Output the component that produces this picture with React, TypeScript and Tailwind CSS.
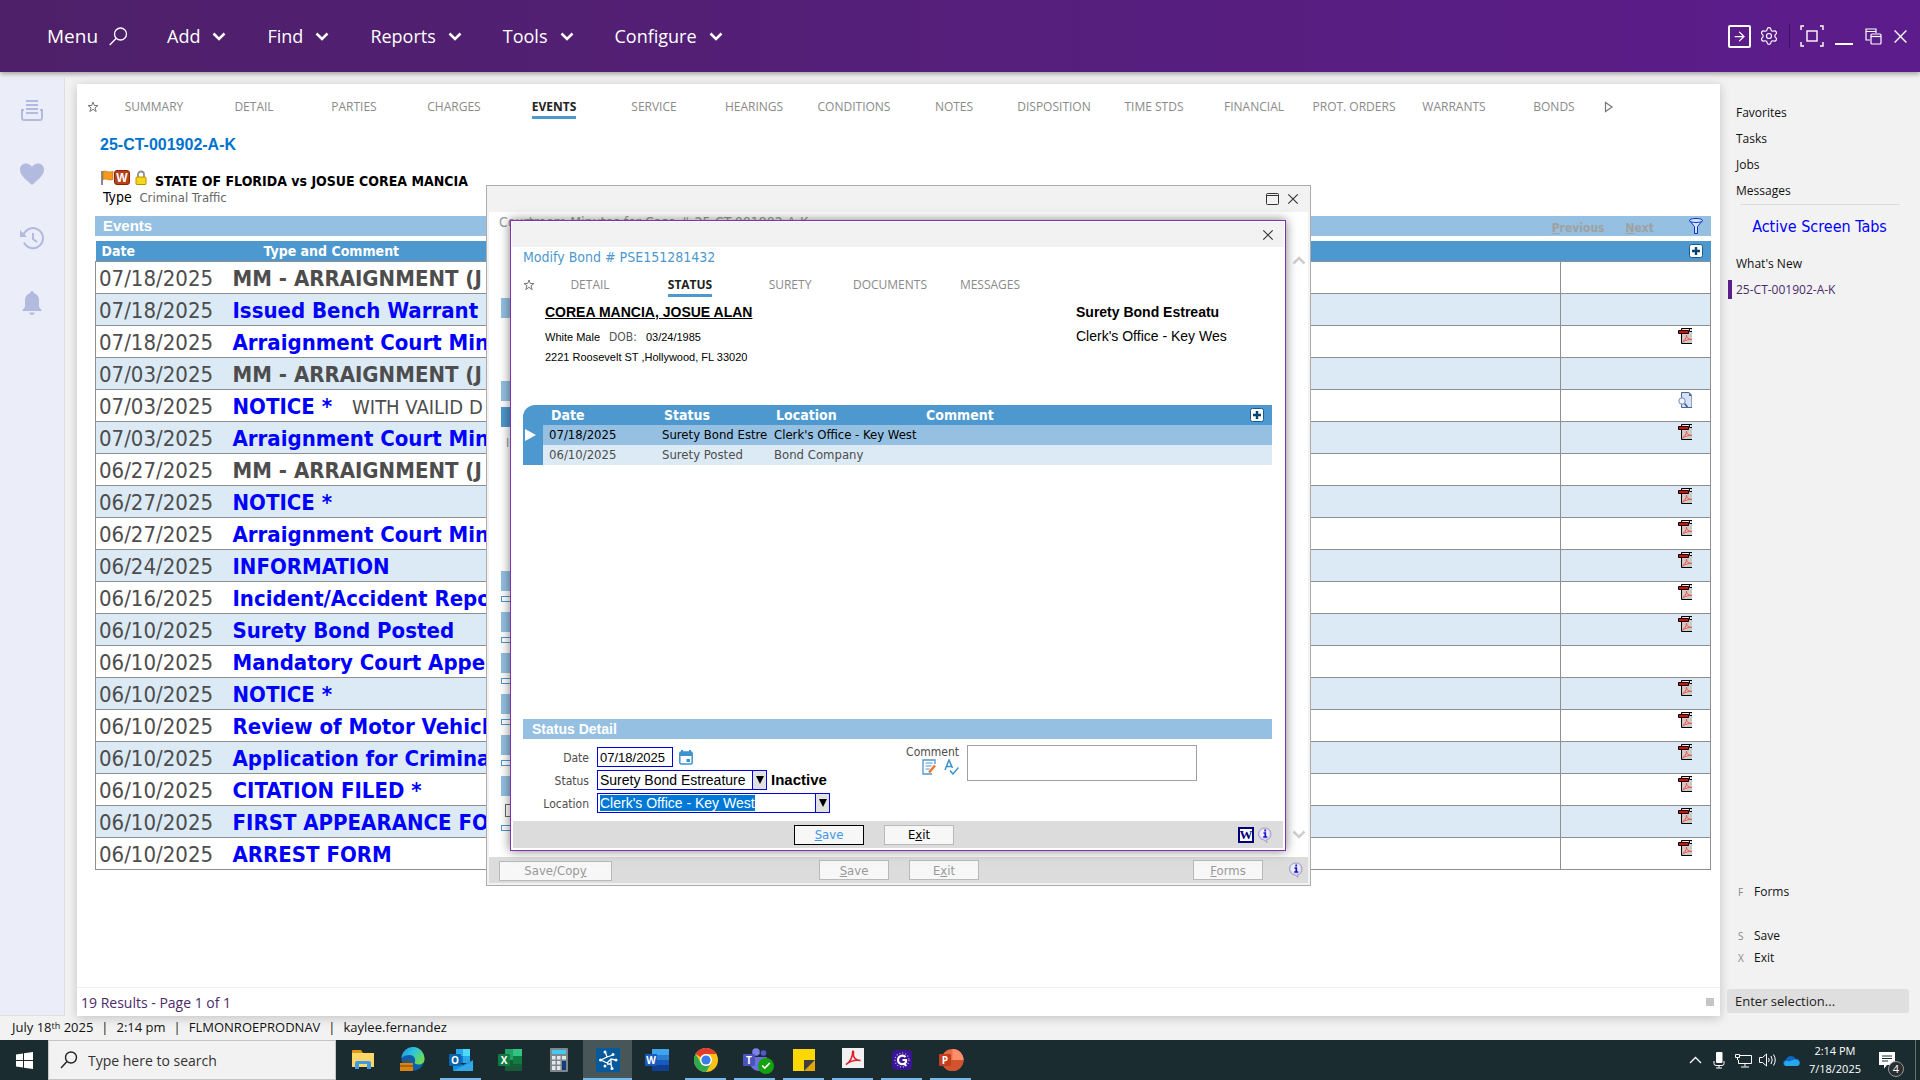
import type { ReactNode } from "react";
import { ArrowRight, Check, Settings } from "lucide-react";

const MENUS = ["Add", "Find", "Reports", "Tools", "Configure"];

const CASE_TABS = [
  "SUMMARY",
  "DETAIL",
  "PARTIES",
  "CHARGES",
  "EVENTS",
  "SERVICE",
  "HEARINGS",
  "CONDITIONS",
  "NOTES",
  "DISPOSITION",
  "TIME STDS",
  "FINANCIAL",
  "PROT. ORDERS",
  "WARRANTS",
  "BONDS",
];

const BOND_TABS = ["DETAIL", "STATUS", "SURETY", "DOCUMENTS", "MESSAGES"];

type EventRow = {
  date: string;
  title: string;
  note?: string;
  plain?: boolean;
  doc?: "pdf" | "scan";
};

const EVENTS: EventRow[] = [
  { date: "07/18/2025", title: "MM - ARRAIGNMENT (J", plain: true },
  { date: "07/18/2025", title: "Issued Bench Warrant" },
  { date: "07/18/2025", title: "Arraignment Court Min", doc: "pdf" },
  { date: "07/03/2025", title: "MM - ARRAIGNMENT (J", plain: true },
  { date: "07/03/2025", title: "NOTICE *", note: "WITH VAILID D", doc: "scan" },
  { date: "07/03/2025", title: "Arraignment Court Min", doc: "pdf" },
  { date: "06/27/2025", title: "MM - ARRAIGNMENT (J", plain: true },
  { date: "06/27/2025", title: "NOTICE *", doc: "pdf" },
  { date: "06/27/2025", title: "Arraignment Court Min", doc: "pdf" },
  { date: "06/24/2025", title: "INFORMATION", doc: "pdf" },
  { date: "06/16/2025", title: "Incident/Accident Repo", doc: "pdf" },
  { date: "06/10/2025", title: "Surety Bond Posted", doc: "pdf" },
  { date: "06/10/2025", title: "Mandatory Court Appea" },
  { date: "06/10/2025", title: "NOTICE *", doc: "pdf" },
  { date: "06/10/2025", title: "Review of Motor Vehicl", doc: "pdf" },
  { date: "06/10/2025", title: "Application for Crimina", doc: "pdf" },
  { date: "06/10/2025", title: "CITATION FILED *", doc: "pdf" },
  { date: "06/10/2025", title: "FIRST APPEARANCE FO", doc: "pdf" },
  { date: "06/10/2025", title: "ARREST FORM", doc: "pdf" },
];

function PdfIcon() {
  return (
    <svg width="14" height="16" viewBox="0 0 14 16" aria-label="PDF document">
      <path d="M3.5 .5H14V15.5H3.5Z" fill="#cbcbcb" />
      <path d="M14 .5H3.5V15.5H14" fill="none" stroke="#000" />
      <path d="M5 1h6v2H5z" fill="#e8e8e8" />
      <path d="M11.500 0v3.500H14" fill="#fff" stroke="#000" />
      <path d="M.5 2.500h10v3H.5z" fill="#e60000" stroke="#000" />
      <path d="M4.500 14c2-1.500 4-4 4-7 0 3 2 4.500 5.500 4.500-3-.5-6.500.5-9.500 2.500z" fill="none" stroke="#f5564a" />
    </svg>
  );
}

function ScanIcon() {
  return (
    <svg width="14" height="16" viewBox="0 0 14 16" aria-label="Scanned document">
      <path d="M3.500.5H11l3 3V15.500H3.500z" fill="#d6e2f3" stroke="#44699f" />
      <path d="M11 .5v3.500h3z" fill="#44699f" />
      <path d="M6.500 11.500l3 3.500" stroke="#2f5590" strokeWidth="1.500" />
      <circle cx="4" cy="9" r="3.200" fill="#eef4fb" stroke="#6b8cbb" />
    </svg>
  );
}

function PlusBox() {
  return (
    <button type="button" aria-label="Add row" className="block">
      <svg width="14" height="14" viewBox="0 0 14 14">
        <rect x=".5" y=".5" width="13" height="13" rx="2" fill="#fff" stroke="#155a92" />
        <path d="M7 3v8M3 7h8" stroke="#0a4470" strokeWidth="2.400" />
      </svg>
    </button>
  );
}

function InfoIcon() {
  return (
    <svg width="16" height="16" viewBox="0 0 16 16" aria-label="Info">
      <path d="M8 1a6 6 0 0 1 1.500 11.800L10 15.500 7 13A6 6 0 0 1 8 1z" fill="#d9d4ee" stroke="#a49cc4" />
      <circle cx="7.500" cy="6.500" r="4.600" fill="#efedfb" />
      <path d="M8.200 2.500v2M6.500 6h1.800v3.800M6.200 10h4" stroke="#1212c8" strokeWidth="1.700" fill="none" />
    </svg>
  );
}

function WindowIcon() {
  return (
    <svg width="13" height="12" viewBox="0 0 13 12" fill="none" stroke="#333">
      <rect x=".5" y=".5" width="12" height="11" rx="1" />
      <path d="M.5 2.500h12" />
    </svg>
  );
}

function CloseIcon({ size }: { size: number }) {
  return (
    <svg width={size} height={size} viewBox="0 0 14 14" fill="none" stroke="currentColor" strokeWidth="1.300">
      <path d="M1.500 1.500l11 11M12.500 1.500l-11 11" />
    </svg>
  );
}

function Chevron({ up }: { up?: boolean }) {
  return (
    <svg width="14" height="9" viewBox="0 0 14 9" fill="none" stroke="currentColor" strokeWidth="2.500">
      <path d={up ? "M1.500 7.500L7 2l5.500 5.500" : "M1.500 1.500L7 7l5.500-5.500"} />
    </svg>
  );
}

function Header() {
  return (
    <header className="relative z-10 flex h-[72px] shrink-0 items-center justify-between bg-linear-to-r from-[#4e2069] to-[#5c1c8c] pr-[12px] pl-[47px] text-white shadow-[0_2px_5px_rgba(0,0,0,0.35)]">
      <nav className="flex items-center gap-[39px] text-[19px]">
        <button type="button" className="flex items-center gap-[11px]">
          Menu
          <svg width="19" height="19" viewBox="0 0 19 19" fill="none" stroke="#fff" strokeWidth="1.300">
            <circle cx="11.500" cy="7" r="6" />
            <path d="M7.300 11.300L.7 18" />
          </svg>
        </button>
        <div className="flex items-center gap-[41px] text-[18px]">
          {MENUS.map((m) => (
            <button key={m} type="button" className="flex items-center gap-3">
              {m}
              <Chevron />
            </button>
          ))}
        </div>
      </nav>
      <div className="flex items-center">
        <button type="button" aria-label="Sign out" className="flex h-[23px] w-[23px] items-center justify-center rounded-[2px] border-2 border-white">
          <ArrowRight size={15} />
        </button>
        <button type="button" aria-label="Settings" className="ml-2">
          <Settings size={20} strokeWidth={1.4} />
        </button>
        <span className="mx-[10px] h-6 w-px bg-[#3b1260]" />
        <button type="button" aria-label="Focus">
          <svg width="24" height="22" viewBox="0 0 24 22" fill="none" stroke="#fff" strokeWidth="1.400">
            <path d="M4 1H1v4M20 1h3v4M4 21H1v-4M20 21h3v-4" />
            <rect x="7" y="6" width="10" height="10" />
          </svg>
        </button>
        <button type="button" aria-label="Minimize" className="mt-[16px] ml-[11px] h-[2px] w-[18px] bg-white" />
        <button type="button" aria-label="Restore" className="ml-3">
          <svg width="17" height="17" viewBox="0 0 17 17" fill="none" stroke="#fff" strokeWidth="1.200">
            <path d="M5 12H1V1h10v4M1 3.500h10" />
            <rect x="6" y="6" width="10" height="10" rx="1" />
            <path d="M6 8.500h10" />
          </svg>
        </button>
        <button type="button" aria-label="Close" className="ml-[11px]">
          <CloseIcon size={15} />
        </button>
      </div>
    </header>
  );
}

function Rail() {
  return (
    <aside className="mt-[6px] flex w-[65px] shrink-0 flex-col items-center gap-10 border-r border-b border-[#dedede] bg-[#ebedf8] pt-[20px] text-[#b3badf]">
      <svg width="24" height="24" viewBox="0 0 24 24" fill="none" stroke="currentColor" strokeWidth="2">
        <path d="M6 3h12M6 7h12M6 11h12M6 15h12" />
        <path d="M4 12H2v8q0 2 2 2h16q2 0 2-2v-8h-2" />
      </svg>
      <svg width="26" height="24" viewBox="0 0 26 24" fill="currentColor">
        <path d="M13 23C6 17 1 13 1 7.500 1 4 3.500 1.500 7 1.500c2.500 0 4.700 1.200 6 3.500 1.300-2.300 3.500-3.500 6-3.500 3.500 0 6 2.500 6 6C25 13 20 17 13 23z" />
      </svg>
      <svg width="26" height="24" viewBox="0 0 26 24" fill="none" stroke="currentColor" strokeWidth="2">
        <path d="M4.500 9a10 10 0 1 1 .5 7.500" />
        <path d="M1 4v7h7z" fill="currentColor" stroke="none" />
        <path d="M14 7v6l4 3" />
      </svg>
      <svg width="24" height="25" viewBox="0 0 24 25" fill="currentColor">
        <path d="M12 1c1.200 0 1.800.8 1.800 2C17 4 19 6.500 19 10v7l3 4H2l3-4v-7c0-3.500 2-6 5.200-7 0-1.200.6-2 1.800-2zM9.500 22.500h5c0 1.500-1 2.500-2.500 2.500s-2.500-1-2.500-2.500z" />
      </svg>
    </aside>
  );
}

function TabStrip({ tabs, active }: { tabs: string[]; active: string }) {
  return (
    <nav className="flex items-center text-[12px] text-[#8a8a8a]">
      <svg width="12" height="12" viewBox="0 0 12 12" fill="none" stroke="#777" className="mr-[5px] mb-[3px] shrink-0">
        <path d="M6 1l1.300 3.500h3.700L8 6.800l1.200 3.800L6 8.300l-3.200 2.300L4 6.800 1 4.500h3.700z" />
      </svg>
      {tabs.map((tab) => (
        <a key={tab} href="#" className="flex w-[100px] justify-center whitespace-nowrap">
          <span className={tab === active ? "border-b-3 border-[#4d98ce] font-bold text-[#222]" : "border-b-3 border-transparent"}>
            {tab}
          </span>
        </a>
      ))}
    </nav>
  );
}

function EventsTable() {
  return (
    <table className="w-full table-fixed border-collapse font-['DejaVu_Sans_Condensed','DejaVu_Sans',sans-serif]">
      <colgroup>
        <col className="w-[132px]" />
        <col />
        <col className="w-[150px]" />
      </colgroup>
      <thead>
        <tr className="h-5 bg-[#4d98ce] text-left text-[14px] leading-[18px] text-white">
          <th className="p-0 pl-[6px]">Date</th>
          <th className="p-0 pl-[36px]">Type and Comment</th>
          <th className="p-0">
            <div className="flex justify-end pr-[8px]">
              <PlusBox />
            </div>
          </th>
        </tr>
      </thead>
      <tbody>
        {EVENTS.map((e, i) => (
          <tr key={i} className="h-8 border border-[#8f8f8f] text-[22px] leading-[28px] text-[#4d4d4d] even:bg-[#dceaf6]">
            <td className="p-0 pt-[3px] pl-[3px]">{e.date}</td>
            <td className="overflow-hidden border-r border-[#8f8f8f] p-0 pt-[3px] pl-[5px] whitespace-nowrap">
              {e.plain ? (
                <b>{e.title}</b>
              ) : (
                <a href="#" className="font-bold text-[#0000ff]">
                  {e.title}
                </a>
              )}
              {e.note ? <span className="ml-5 text-[20px]">{e.note}</span> : null}
            </td>
            <td className="p-0">
              <div className="flex justify-end pr-[18px] pb-[10px]">
                {e.doc === "pdf" ? <PdfIcon /> : null}
                {e.doc === "scan" ? <ScanIcon /> : null}
              </div>
            </td>
          </tr>
        ))}
      </tbody>
    </table>
  );
}

function CasePanel() {
  return (
    <main className="mt-[12px] mr-0 ml-[12px] flex min-w-0 flex-1 flex-col bg-white shadow-[0_2px_10px_rgba(0,0,0,0.2)]">
      <div className="flex items-center pt-[14px] pl-[10px]">
        <TabStrip tabs={CASE_TABS} active="EVENTS" />
        <button type="button" aria-label="More tabs" className="mb-[3px]">
          <svg width="10" height="12" viewBox="0 0 10 12" fill="none" stroke="#777" strokeWidth="1.200">
            <path d="M1.500 1.500v9L8 6z" />
          </svg>
        </button>
      </div>
      <div className="flex flex-1 flex-col pr-[9px] pl-[18px]">
        <h1 className="mt-4 pl-[5px] font-['Liberation_Sans',sans-serif] text-[16px] leading-5 font-bold text-[#0073cf]">
          25-CT-001902-A-K
        </h1>
        <div className="mt-[11px] flex items-center pl-[5px]">
          <svg width="14" height="16" viewBox="0 0 14 16">
            <path d="M1 1h2v14H1z" fill="#8a8a8a" />
            <path d="M3 1.500c3-1.500 4 1.500 10 0v8c-5 1.500-6-1.500-10 0z" fill="#f59a1b" stroke="#b86a0a" strokeWidth=".6" />
          </svg>
          <span className="flex h-[15px] w-[16px] items-center justify-center rounded-[3px] border border-[#8c2508] bg-[#b8411c] font-['Liberation_Sans',sans-serif] text-[12px] font-bold text-white">
            W
          </span>
          <svg width="12" height="16" viewBox="0 0 12 16" className="ml-[5px]">
            <path d="M3 8V4.500a3 3 0 0 1 6 0V8" fill="none" stroke="#909090" strokeWidth="1.800" />
            <rect x="1" y="7" width="10" height="7.500" rx="1" fill="#f7d51d" stroke="#b89200" />
          </svg>
          <span className="ml-[8px] pt-[7px] font-['DejaVu_Sans_Condensed','DejaVu_Sans',sans-serif] text-[14px] leading-4 font-bold text-black">
            STATE OF FLORIDA vs JOSUE COREA MANCIA
          </span>
        </div>
        <p className="pl-[8px] font-['DejaVu_Sans_Condensed','DejaVu_Sans',sans-serif] text-[13px] leading-4 text-black">
          <span className="text-[14px]">Type</span> <span className="ml-1 text-[#666]">Criminal Traffic</span>
        </p>
        <div className="mt-[10px] flex h-5 items-center bg-[#95c0e2] pr-[8px] pl-[8px] font-['Liberation_Sans',sans-serif] text-white">
          <h2 className="flex-1 text-[15px] font-bold">Events</h2>
          <div className="flex items-center gap-[21px] pt-[3px] font-['DejaVu_Sans_Condensed','DejaVu_Sans',sans-serif] text-[12px] leading-4 font-bold text-[#a0a0a0] [text-shadow:1px_1px_0_#fff]">
            <button type="button">
              <u>P</u>revious
            </button>
            <button type="button">
              <u>N</u>ext
            </button>
          </div>
          <button type="button" aria-label="Filter" className="ml-[35px]">
            <svg width="14" height="16" viewBox="0 0 14 16" fill="#d5e6ff" stroke="#0a2fd0">
              <path d="M.5 2.500l5 6V15.500h3V8.500l5-6z" />
              <ellipse cx="7" cy="2.500" rx="6.500" ry="2" />
            </svg>
          </button>
        </div>
        <div className="mt-[5px]">
          <EventsTable />
        </div>
      </div>
      <footer className="flex h-[29px] items-center justify-between border-t border-[#efefef] pr-[6px] pl-[4px] text-[14px] text-[#4b2a6b]">
        19 Results - Page 1 of 1
        <span className="h-2 w-2 bg-[#c6c6c6]" />
      </footer>
    </main>
  );
}

function SideLink({ children }: { children: ReactNode }) {
  return (
    <a href="#" className="block h-[26px] pl-[4px] leading-[26px] text-[#111]">
      {children}
    </a>
  );
}

function Sidebar() {
  return (
    <aside className="flex w-[200px] shrink-0 flex-col pt-[28px] pr-[11px] pb-[3px] pl-[7px] text-[12px]">
      <div className="pl-[5px]">
        <SideLink>Favorites</SideLink>
        <SideLink>Tasks</SideLink>
        <SideLink>Jobs</SideLink>
        <SideLink>Messages</SideLink>
      </div>
      <hr className="mr-[9px] ml-[13px] border-[#dcdcdc]" />
      <h2 className="mt-[10px] pl-[3px] text-center font-['DejaVu_Sans_Condensed','DejaVu_Sans',sans-serif] text-[16px] leading-6 text-[#0000ff]">
        Active Screen Tabs
      </h2>
      <div className="mt-[12px] pl-[5px]">
        <SideLink>What's New</SideLink>
      </div>
      <a href="#" className="mt-[3px] ml-[1px] block border-l-4 border-[#5c1c8c] pl-[4px] leading-[19px] text-[#4b2a6b]">
        25-CT-001902-A-K
      </a>
      <div className="flex-1" />
      <div className="grid grid-cols-[16px_1fr] pl-[11px] leading-[22px] text-[#111]">
        <span className="text-[10px] text-[#888]">F</span>
        <a href="#" className="mb-[22px]">Forms</a>
        <span className="text-[10px] text-[#888]">S</span>
        <a href="#">Save</a>
        <span className="text-[10px] text-[#888]">X</span>
        <a href="#">Exit</a>
      </div>
      <input
        aria-label="Enter selection"
        placeholder="Enter selection..."
        className="mt-[20px] h-6 w-full rounded-[3px] bg-[#dfdfdf] px-[8px] text-[13px] placeholder:text-[#222]"
      />
    </aside>
  );
}

function StatusBar() {
  return (
    <div className="flex h-6 shrink-0 items-center gap-[8px] pb-[2px] pl-[12px] text-[13px] leading-none text-[#111]">
      <span>
        July 18<span className="align-[3px] text-[9px]">th</span> 2025
      </span>
      <span>|</span>
      <span>2:14 pm</span>
      <span>|</span>
      <span>FLMONROEPRODNAV</span>
      <span>|</span>
      <span>kaylee.fernandez</span>
    </div>
  );
}

function MinutesSection() {
  return (
    <>
      <div className="h-5 bg-[#95c0e2]" />
      <div className="mt-[5px] mb-[10px] h-[6px] border border-[#4d98ce]" />
    </>
  );
}

function GreyButton({ children, wide }: { children: ReactNode; wide?: boolean }) {
  return (
    <button
      type="button"
      className={
        (wide ? "w-[113px]" : "w-[70px]") +
        " h-5 border border-[#b9b9b9] bg-[#f7f7f7] text-[13px] leading-none text-[#999]"
      }
    >
      {children}
    </button>
  );
}

function MinutesWindow() {
  return (
    <section className="absolute top-[185px] left-[486px] z-20 flex h-[701px] w-[825px] flex-col border border-[#acacac] bg-[#f2f2f2] font-['DejaVu_Sans_Condensed','DejaVu_Sans',sans-serif]">
      <div className="flex h-[26px] items-center justify-end gap-[8px] pr-[11px] text-[#333]">
        <button type="button" aria-label="Maximize">
          <WindowIcon />
        </button>
        <button type="button" aria-label="Close window">
          <CloseIcon size={12} />
        </button>
      </div>
      <div className="mx-[2px] flex min-h-0 flex-1 bg-white">
        <div className="flex-1 overflow-hidden pr-[20px] pl-[12px]">
          <h2 className="-ml-[2px] pt-[2px] text-[14px] leading-4 text-[#999]">Courtroom Minutes for Case # 25-CT-001902-A-K</h2>
          <div className="mt-[68px] h-5 bg-[#95c0e2]" />
          <div className="mt-[63px] h-5 bg-[#95c0e2]" />
          <div className="mt-[6px] h-5 bg-[#4d98ce]" />
          <p className="mt-[8px] mb-[120px] pl-[5px] text-[12px] leading-4 text-[#999]">I</p>
          <MinutesSection />
          <MinutesSection />
          <MinutesSection />
          <MinutesSection />
          <MinutesSection />
          <div className="h-5 bg-[#95c0e2]" />
          <div className="mt-[8px] ml-1 h-[13px] w-20 border border-[#666]" />
          <div className="mt-[8px] h-[6px] border border-[#4d98ce]" />
        </div>
        <div className="flex w-[18px] flex-col items-center justify-between pt-[44px] pb-[18px] text-[#cfcfcf]">
          <Chevron up />
          <Chevron />
        </div>
      </div>
      <div className="mx-[2px] mb-[2px] grid h-[26px] grid-cols-[1fr_auto_1fr] items-center bg-[#dcdcdc] pr-[4px] pl-[10px]">
        <div>
          <GreyButton wide>
            Save/Cop<u>y</u>
          </GreyButton>
        </div>
        <div className="flex gap-5 pr-[5px]">
          <GreyButton>
            <u>S</u>ave
          </GreyButton>
          <GreyButton>
            E<u>x</u>it
          </GreyButton>
        </div>
        <div className="flex items-center justify-end gap-[25px]">
          <GreyButton>
            <u>F</u>orms
          </GreyButton>
          <InfoIcon />
        </div>
      </div>
    </section>
  );
}

function BondHistory() {
  return (
    <div className="mt-[38px] mr-[12px] ml-[11px] flex rounded-tl-[12px] bg-[#4d98ce]">
      <div className="flex w-5 shrink-0 items-start pt-[24px] pl-[2px]">
        <svg width="11" height="12" viewBox="0 0 11 12" fill="#fff">
          <path d="M0 0v12L11 6z" />
        </svg>
      </div>
      <table className="w-full table-fixed border-collapse text-left text-[13px] leading-5">
        <colgroup>
          <col className="w-[113px]" />
          <col className="w-[112px]" />
          <col className="w-[152px]" />
          <col />
        </colgroup>
        <thead>
          <tr className="h-5 text-[14px] text-white">
            <th className="p-0 pl-[8px]">Date</th>
            <th className="p-0 pl-[8px]">Status</th>
            <th className="p-0 pl-[8px]">Location</th>
            <th className="p-0 pl-[6px]">
              <div className="flex items-center justify-between pr-[8px]">
                Comment
                <PlusBox />
              </div>
            </th>
          </tr>
        </thead>
        <tbody className="whitespace-nowrap">
          <tr className="h-5 bg-[#95c0e2] text-black">
            <td className="p-0 pl-[6px]">07/18/2025</td>
            <td className="overflow-hidden p-0 pl-[6px]">Surety Bond Estrea</td>
            <td className="p-0 pl-[6px]">Clerk's Office - Key West</td>
            <td className="p-0" />
          </tr>
          <tr className="h-5 bg-[#dceaf6] text-[#4d4d4d]">
            <td className="p-0 pl-[6px]">06/10/2025</td>
            <td className="p-0 pl-[6px]">Surety Posted</td>
            <td className="p-0 pl-[6px]">Bond Company</td>
            <td className="p-0" />
          </tr>
        </tbody>
      </table>
    </div>
  );
}

function DropArrow() {
  return (
    <span className="flex w-[14px] items-start justify-center self-stretch border-l border-[#0000e0] bg-[#e1e1e1] pt-[5px]">
      <svg width="8" height="8" viewBox="0 0 8 8">
        <path d="M0 0h8L4 8z" />
      </svg>
    </span>
  );
}

function StatusForm() {
  return (
    <form className="flex justify-between pt-[6px] pr-[87px] pb-[8px] pl-[11px] text-[12px] text-[#4d4d4d]">
      <div className="grid grid-cols-[66px_auto] gap-x-[8px] gap-y-[3px]">
        <label htmlFor="bond-date" className="pt-[4px] text-right">Date</label>
        <div className="flex items-center gap-[6px] pt-[2px]">
          <input
            id="bond-date"
            defaultValue="07/18/2025"
            className="h-5 w-[76px] border border-[#0000e0] px-[2px] font-['Liberation_Sans',sans-serif] text-[13px] text-black"
          />
          <svg width="14" height="15" viewBox="0 0 14 15">
            <path d="M3 0v3M11 0v3" stroke="#3c93cf" strokeWidth="2" />
            <rect x=".8" y="2" width="12.400" height="12" rx="1.500" fill="#fff" stroke="#3c93cf" strokeWidth="1.500" />
            <path d="M1 2h12v4H1zM7.500 9h3.500v3H7.500z" fill="#3c93cf" />
          </svg>
        </div>
        <label htmlFor="bond-status" className="pt-[2px] text-right">Status</label>
        <div className="flex items-center">
          <div className="flex h-5 w-[170px] items-center border border-[#0000e0] bg-white">
            <select
              id="bond-status"
              defaultValue="Surety Bond Estreature"
              className="min-w-0 flex-1 appearance-none px-[2px] font-['Liberation_Sans',sans-serif] text-[14px] leading-4 text-black"
            >
              <option>Surety Bond Estreature</option>
              <option>Surety Posted</option>
            </select>
            <DropArrow />
          </div>
          <b className="pl-[4px] font-['Liberation_Sans',sans-serif] text-[15px] leading-4 text-black">Inactive</b>
        </div>
        <label htmlFor="bond-location" className="pt-[2px] text-right">Location</label>
        <div className="flex h-5 w-[233px] items-center border border-[#0000e0] bg-white pl-[2px]">
          <select
            id="bond-location"
            defaultValue="Clerk's Office - Key West"
            className="field-sizing-content appearance-none bg-[#0078d7] font-['Liberation_Sans',sans-serif] text-[14px] leading-4 text-white"
          >
            <option>Clerk's Office - Key West</option>
            <option>Bond Company</option>
          </select>
          <span className="flex-1" />
          <DropArrow />
        </div>
      </div>
      <div className="flex gap-[8px]">
        <div>
          <label htmlFor="bond-comment" className="block leading-[14px]">Comment</label>
          <div className="flex justify-end gap-[7px]">
            <svg width="15" height="16" viewBox="0 0 15 16" fill="none">
              <path d="M13 5V1H1v14h9" stroke="#4d98ce" strokeWidth="1.300" />
              <path d="M3.500 4h7M3.500 7h6M3.500 10h4" stroke="#4d98ce" />
              <path d="M7 13.500l6-7" stroke="#f07530" strokeWidth="2.500" />
            </svg>
            <svg width="15" height="16" viewBox="0 0 15 16" fill="none" stroke="#3c93cf" strokeWidth="1.500">
              <path d="M1 11L5 1l3.500 8M2.500 7.500H8" />
              <path d="M6 11.500l3 3.500 5.500-6.500" />
            </svg>
          </div>
        </div>
        <textarea id="bond-comment" className="h-9 w-[230px] resize-none border border-[#a0a0a0]" />
      </div>
    </form>
  );
}

function BondWindow() {
  return (
    <section className="absolute top-[220px] left-[510px] z-30 flex h-[631px] w-[776px] flex-col border border-[#8430b5] bg-white p-px font-['DejaVu_Sans_Condensed','DejaVu_Sans',sans-serif] shadow-[0_0_10px_rgba(0,0,0,0.5)]">
      <div className="flex h-[25px] shrink-0 items-center justify-end bg-[#f2f2f2] pr-[10px] text-[#333]">
        <button type="button" aria-label="Close bond window">
          <CloseIcon size={12} />
        </button>
      </div>
      <h2 className="pt-px pl-[11px] text-[14px] leading-[18px] text-[#4d98ce]">Modify Bond # PSE151281432</h2>
      <div className="mt-[10px] pl-[11px] font-['Open_Sans',sans-serif]">
        <TabStrip tabs={BOND_TABS} active="STATUS" />
      </div>
      <div className="mt-[5px] flex justify-between pr-[60px] pl-[33px] font-['Liberation_Sans',sans-serif] text-[11px] leading-5 text-black">
        <div>
          <a href="#" className="text-[14px] font-bold underline">COREA MANCIA, JOSUE ALAN</a>
          <p className="mt-[4px]">
            White Male
            <span className="mx-[9px] font-['DejaVu_Sans_Condensed','DejaVu_Sans',sans-serif] text-[12px] text-[#555]">DOB:</span>
            03/24/1985
          </p>
          <p>2221 Roosevelt ST ,Hollywood, FL 33020</p>
        </div>
        <div className="w-[148px] text-[14px] whitespace-nowrap">
          <b>Surety Bond Estreatu</b>
          <p className="mt-[4px]">Clerk's Office - Key Wes</p>
        </div>
      </div>
      <BondHistory />
      <div className="flex-1" />
      <h3 className="mr-[12px] ml-[11px] h-5 shrink-0 bg-[#95c0e2] pl-[9px] font-['Liberation_Sans',sans-serif] text-[14px] leading-5 font-bold text-white">
        Status Detail
      </h3>
      <StatusForm />
      <div className="mx-px mb-px grid h-[27px] shrink-0 grid-cols-[1fr_auto_1fr] items-center bg-[#dcdcdc] pr-[10px] text-[13px]">
        <span />
        <div className="flex gap-5 pr-[38px]">
          <button type="button" className="h-5 w-[70px] border border-black bg-[#f7f7f7] leading-none text-[#3b97e8]">
            <u>S</u>ave
          </button>
          <button type="button" className="h-5 w-[70px] border border-[#b9b9b9] bg-[#f7f7f7] leading-none text-black">
            E<u>x</u>it
          </button>
        </div>
        <div className="flex items-center justify-end gap-[3px]">
          <span className="flex h-4 w-4 items-center justify-center border-2 border-[#00007a] bg-white font-['Liberation_Serif',serif] text-[13px] font-bold text-[#00007a]">
            W
          </span>
          <InfoIcon />
        </div>
      </div>
    </section>
  );
}

function OfficeIcon({ letter, kind }: { letter: string; kind: "outlook" | "excel" | "word" | "ppt" | "teams" }) {
  const tile = { outlook: "#0a64ad", excel: "#107c41", word: "#185abd", ppt: "#c43e1c", teams: "#4b53bc" }[kind];
  return (
    <svg width="26" height="26" viewBox="0 0 26 26">
      {kind === "outlook" ? (
        <>
          <path d="M8 2h14v14H8z" fill="#28a8ea" />
          <path d="M15 2h7v7h-7z" fill="#50d9ff" />
          <path d="M8 9h7v7H8z" fill="#0078d4" />
          <path d="M5 13l10 5 10-5v11H5z" fill="#1490df" />
          <path d="M5 24l20-10v10z" fill="#32a9e7" />
        </>
      ) : null}
      {kind === "excel" ? (
        <>
          <path d="M8 2h8v11H8z" fill="#21a366" />
          <path d="M16 2h9v7h-9z" fill="#33c481" />
          <path d="M16 9h9v8h-9z" fill="#107c41" />
          <path d="M8 13h8v11H8zM16 17h9v7h-9z" fill="#185c37" />
        </>
      ) : null}
      {kind === "word" ? (
        <>
          <path d="M8 2h17v6H8z" fill="#41a5ee" />
          <path d="M8 8h17v5H8z" fill="#2b7cd3" />
          <path d="M8 13h17v5H8z" fill="#185abd" />
          <path d="M8 18h17v6H8z" fill="#103f91" />
        </>
      ) : null}
      {kind === "ppt" ? (
        <>
          <circle cx="14.500" cy="13" r="11" fill="#ed6c47" />
          <path d="M14.500 2a11 11 0 0 1 11 11h-11z" fill="#ff8f6b" />
          <path d="M3.500 13h22a11 11 0 0 1-22 0z" fill="#d35230" />
        </>
      ) : null}
      {kind === "teams" ? (
        <>
          <circle cx="14" cy="5" r="3.800" fill="#7b83eb" />
          <circle cx="21.500" cy="6" r="2.800" fill="#5059c9" />
          <path d="M8 10h17v6c0 5-3 8-8 8s-9-4-9-8z" fill="#6a72dc" />
        </>
      ) : null}
      <rect x="1" y="7" width="12" height="12" rx="1" fill={tile} />
      <text x="7" y="16.500" textAnchor="middle" fontSize="10" fontWeight="bold" fill="#fff" fontFamily="Open Sans, sans-serif">
        {letter}
      </text>
    </svg>
  );
}

function TaskItem({ label, open, active, children }: { label: string; open?: boolean; active?: boolean; children: ReactNode }) {
  return (
    <button
      type="button"
      aria-label={label}
      className={
        "relative flex h-10 w-[49px] items-center justify-center " + (active ? "bg-[#475658]" : "")
      }
    >
      {children}
      {open ? <span className={active ? "absolute inset-x-0 bottom-0 h-[2px] bg-[#76b9ed]" : "absolute inset-x-1 bottom-0 h-[2px] bg-[#76b9ed]"} /> : null}
    </button>
  );
}

function Taskbar() {
  return (
    <footer className="flex h-10 shrink-0 items-center bg-[#1b2c30] text-white">
      <button type="button" aria-label="Start" className="flex w-12 justify-center">
        <svg width="17" height="17" viewBox="0 0 17 17" fill="#fff">
          <path d="M0 2.500l7-1V8H0zM8 1.300L17 0v8H8zM0 9h7v6.500l-7-1zM8 9h9v8l-9-1.300z" />
        </svg>
      </button>
      <label className="flex h-10 w-[288px] items-center gap-[10px] border border-[#c6c6c6] bg-[#f2f2f2] pl-[11px]">
        <svg width="18" height="18" viewBox="0 0 18 18" fill="none" stroke="#222" strokeWidth="1.400">
          <circle cx="11" cy="6.500" r="5.500" />
          <path d="M7 10.500L1 17" />
        </svg>
        <input aria-label="Search" placeholder="Type here to search" className="min-w-0 flex-1 pt-px text-[14px] placeholder:text-[#333]" />
      </label>
      <div className="ml-[2px] flex flex-1">
        <TaskItem label="File Explorer">
          <svg width="24" height="22" viewBox="0 0 24 22">
            <path d="M1 2q0-1 1-1h8l2 3H1z" fill="#e09b13" />
            <path d="M1 4h22v14H1z" fill="#ffd766" />
            <path d="M4 20v-6q0-2 2-2h12q2 0 2 2v6h-4v-5H8v5z" fill="#3f9be8" />
          </svg>
        </TaskItem>
        <TaskItem label="Edge">
          <svg width="26" height="26" viewBox="0 0 26 26">
            <defs>
              <linearGradient id="edge" x1="0" y1="0" x2="1" y2="0.600">
                <stop offset="0" stopColor="#1b8de0" />
                <stop offset=".5" stopColor="#2fc4dc" />
                <stop offset="1" stopColor="#6fdc4e" />
              </linearGradient>
            </defs>
            <circle cx="14" cy="12" r="11.500" fill="#0f5fa8" />
            <path d="M2.500 11a11.500 11.500 0 0 1 23 1c0 4-3 5.500-6 5.500s-4.500-1-3.500-3S15 8 11 8s-7 1-8.500 3z" fill="url(#edge)" />
            <path d="M1 16h13v8H1z" fill="#d98413" />
            <path d="M5 16v-2h5v2M1 19h13" fill="none" stroke="#7a4306" />
          </svg>
        </TaskItem>
        <TaskItem label="Outlook" open>
          <OfficeIcon letter="O" kind="outlook" />
        </TaskItem>
        <TaskItem label="Excel">
          <OfficeIcon letter="X" kind="excel" />
        </TaskItem>
        <TaskItem label="Calculator">
          <svg width="18" height="24" viewBox="0 0 18 24">
            <rect width="18" height="24" rx="1" fill="#7e878c" />
            <path d="M2 2h14v4H2z" fill="#44c8f5" />
            <path d="M2 8h3.500v3.500H2zM7 8h3.500v3.500H7zM12 8h4v3.500h-4zM2 13h3.500v3.500H2zM7 13h3.500v3.500H7zM2 18h3.500v4H2zM7 18h3.500v4H7z" fill="#e4e8ea" />
            <path d="M12 13h4v9h-4z" fill="#163c7c" />
          </svg>
        </TaskItem>
        <TaskItem label="Court Manager" open active>
          <svg width="24" height="24" viewBox="0 0 24 24">
            <rect width="24" height="24" fill="#065a9b" />
            <path d="M9 3l2 6 6-2M11 9l-6 3 6 3M11 15l4-4 5 1M15 11l0 5-4 0M15 16l1 5" fill="none" stroke="#fff" strokeWidth="1.300" />
            <g fill="#fff">
              <circle cx="9" cy="4" r="1.500" />
              <circle cx="17" cy="6.500" r="1.500" />
              <circle cx="4.500" cy="12" r="1.500" />
              <circle cx="20" cy="12" r="1.500" />
              <circle cx="16" cy="20.500" r="1.500" />
              <circle cx="9" cy="18" r="1.500" />
            </g>
          </svg>
        </TaskItem>
        <TaskItem label="Word">
          <OfficeIcon letter="W" kind="word" />
        </TaskItem>
        <TaskItem label="Chrome" open>
          <svg width="24" height="24" viewBox="0 0 24 24">
            <circle cx="12" cy="12" r="12" fill="#fbc116" />
            <path d="M1.600 6A12 12 0 0 1 22.400 6H12a6 6 0 0 0-5.200 3z" fill="#e33b2e" />
            <path d="M1.600 6A12 12 0 0 0 12 24l5.200-9A6 6 0 0 1 6.800 15z" fill="#2da94f" />
            <circle cx="12" cy="12" r="6" fill="#fff" />
            <circle cx="12" cy="12" r="4.600" fill="#3a7cec" />
          </svg>
        </TaskItem>
        <TaskItem label="Teams" open>
          <OfficeIcon letter="T" kind="teams" />
          <span className="absolute right-[5px] bottom-[6px] flex h-4 w-4 items-center justify-center rounded-full bg-[#13a10e]">
            <Check size={10} strokeWidth={4} />
          </span>
        </TaskItem>
        <TaskItem label="Sticky Notes" open>
          <svg width="22" height="22" viewBox="0 0 22 22">
            <path d="M0 0h22v22H0z" fill="#fdd800" />
            <path d="M11 22l11-11v11z" fill="#e0a800" />
            <path d="M11 11h11L11 22z" fill="#3f3f3f" />
          </svg>
        </TaskItem>
        <TaskItem label="Acrobat" open>
          <svg width="22" height="20" viewBox="0 0 22 20" className="mb-1">
            <path d="M0 0h22v20H0z" fill="#f1f1f1" />
            <path d="M4 16.500c4-2 7-8 6.500-12.500C10.500 2.500 12 3 11.500 5c-1 5 3 7.500 7 7.500-5-1-11 1-14.500 4z" fill="none" stroke="#e0202a" strokeWidth="1.500" />
          </svg>
        </TaskItem>
        <TaskItem label="Recorder" open>
          <svg width="20" height="20" viewBox="0 0 20 20">
            <rect width="20" height="20" rx="4" fill="#3a1596" />
            <circle cx="10" cy="10" r="7" fill="none" stroke="#cbb8ff" strokeWidth="1.200" strokeDasharray="1 2" />
            <path d="M13.500 7A4.300 4.300 0 1 0 14 12v-2h-3.500M12 13l2 3" fill="none" stroke="#fff" strokeWidth="2.200" />
          </svg>
        </TaskItem>
        <TaskItem label="PowerPoint" open>
          <OfficeIcon letter="P" kind="ppt" />
        </TaskItem>
      </div>
      <div className="flex items-center text-[11px] leading-[18px]">
        <svg width="13" height="8" viewBox="0 0 13 8" fill="none" stroke="#fff" strokeWidth="1.300">
          <path d="M1 7l5.500-5.500L12 7" />
        </svg>
        <svg width="12" height="17" viewBox="0 0 12 17" className="ml-[11px]">
          <rect x="3" width="6.500" height="11" rx="1" fill="#fff" />
          <path d="M1 9v2.500q0 2 2 2h6q2 0 2-2V9M6 13.500V16M3 16h6" fill="none" stroke="#fff" />
        </svg>
        <svg width="17" height="15" viewBox="0 0 17 15" fill="none" stroke="#fff" className="ml-[10px]">
          <path d="M5 2.500h11.500v8H3.500V7M10 10.500v3M6 14h8" />
          <path d="M.5 1.500h4v3h-4zM2.500 4.500V7" />
        </svg>
        <svg width="17" height="14" viewBox="0 0 17 14" fill="none" stroke="#fff" className="ml-[7px]">
          <path d="M.5 4.500h3l4-3.500v12l-4-3.500h-3zM9.500 5q1.500 2 0 4M12 3q2.500 4 0 8M14.500 1.500q3.500 5.500 0 11" />
        </svg>
        <svg width="17" height="11" viewBox="0 0 17 11" className="ml-[7px]">
          <path d="M3 5a5 5 0 0 1 9.500-1A3.500 3.500 0 0 1 14 11H3.500A3 3 0 0 1 3 5z" fill="#0b65c2" />
          <path d="M1 9c0-3 3-4 5-2.500l5-2c4-.5 6 2 5.500 4 0 1.500-1 2.500-3 2.500H3.500Q1.500 11 1 9z" fill="#28a8ea" />
        </svg>
        <div className="ml-[9px] text-center">
          2:14 PM
          <br />
          7/18/2025
        </div>
        <button type="button" aria-label="Notifications" className="relative mr-[19px] ml-[18px]">
          <svg width="17" height="17" viewBox="0 0 17 17">
            <path d="M0 0h16v13H8l-3 3.500V13H0z" fill="#fff" />
            <path d="M3 4h10M3 6.500h10M3 9h6" stroke="#1b2c30" />
          </svg>
          <span className="absolute -right-[8px] -bottom-[8px] flex h-4 w-4 items-center justify-center rounded-full border border-[#999] bg-[#2b2f31] text-[11px] leading-none">
            4
          </span>
        </button>
        <span className="mr-1 h-10 w-px bg-[#677073]" />
      </div>
    </footer>
  );
}

export default function App() {
  return (
    <div className="relative flex h-screen min-h-[1000px] flex-col overflow-hidden bg-[#f2f2f2] font-['Open_Sans',sans-serif]">
      <Header />
      <div className="flex min-h-0 flex-1">
        <Rail />
        <CasePanel />
        <Sidebar />
      </div>
      <StatusBar />
      <Taskbar />
      <MinutesWindow />
      <BondWindow />
    </div>
  );
}
